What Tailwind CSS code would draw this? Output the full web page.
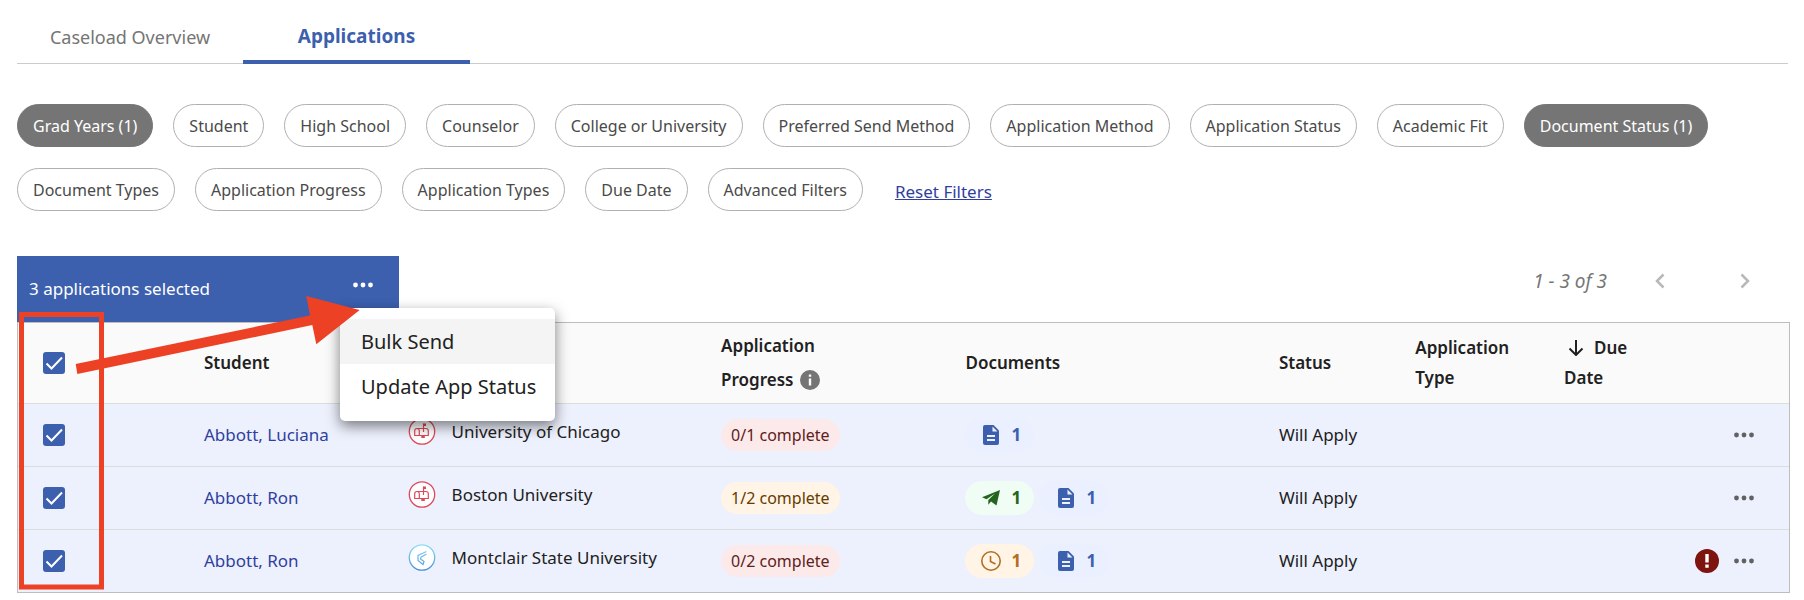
<!DOCTYPE html>
<html lang="en">
<head>
    <meta charset="UTF-8">
    <meta name="viewport" content="width=device-width, initial-scale=1.0">
    <title>Applications</title>
    <script src="https://cdn.jsdelivr.net/npm/@tailwindcss/browser@4"></script>
</head>
<body class="bg-white font-['Noto_Sans',sans-serif] text-[17px] text-[#212121]">
    <!-- Shared icons -->
    <svg class="hidden">
        <symbol id="dots" viewBox="0 0 20 6">
            <circle cx="2.500" cy="3" r="2.400" fill="currentColor"/>
            <circle cx="10" cy="3" r="2.400" fill="currentColor"/>
            <circle cx="17.500" cy="3" r="2.400" fill="currentColor"/>
        </symbol>
        <symbol id="tick" viewBox="0 0 22 22">
            <path d="M3.500 11.500 8.500 16.500 19 5.500" fill="none" stroke="#fff" stroke-width="2"/>
        </symbol>
        <symbol id="doc" viewBox="0 0 16 20">
            <path d="M2 0H10.500L16 5.500V18a2 2 0 0 1-2 2H2a2 2 0 0 1-2-2V2a2 2 0 0 1 2-2Z" fill="currentColor"/>
            <path d="M9.500 1.500V6.500H14.500ZM4 10H12V12H4ZM4 14H12V16H4Z" fill="#edf1fd"/>
        </symbol>
        <symbol id="mailbox" viewBox="0 0 28 27">
            <circle cx="14" cy="13.500" r="12.700" fill="#fff" stroke="#dc4a5c" stroke-width="1.300"/>
            <g fill="none" stroke="#dc4a5c" stroke-width="1.200">
                <path d="M9 10.500h9a2.300 2.300 0 0 1 2.300 2.300v4.700H6.700V12.800a2.300 2.300 0 0 1 4.600 0v4.700"/>
                <path d="M15.500 14V5.500"/>
            </g>
            <path d="M15.500 5.500h2.500v2.500h-2.500ZM13.300 17.500h3.500v2.500h-3.500Z" fill="#dc4a5c"/>
        </symbol>
    </svg>

    <main class="relative px-4">
        <!-- Tabs -->
        <nav class="ml-px flex h-16 border-b border-[#ccc]">
            <button class="h-16 w-[226px] pt-3 pb-0.5 text-lg text-[#757575]">Caseload Overview</button>
            <button class="h-16 w-[227px] border-b-4 border-[#3c5fae] pt-3 text-[19px] font-bold text-[#3c5fae]">Applications</button>
        </nav>

        <!-- Filters -->
        <div class="mt-10 ml-px flex flex-wrap gap-x-5 gap-y-[21px]">
            <button class="h-[43px] rounded-full border border-[#757575] bg-[#757575] px-[15px] text-base text-white">Grad Years (1)</button>
            <button class="h-[43px] rounded-full border border-[#b0b0b0] px-[15px] text-base text-[#4a4a4a]">Student</button>
            <button class="h-[43px] rounded-full border border-[#b0b0b0] px-[15px] text-base text-[#4a4a4a]">High School</button>
            <button class="h-[43px] rounded-full border border-[#b0b0b0] px-[15px] text-base text-[#4a4a4a]">Counselor</button>
            <button class="h-[43px] rounded-full border border-[#b0b0b0] px-[15px] text-base text-[#4a4a4a]">College or University</button>
            <button class="h-[43px] rounded-full border border-[#b0b0b0] px-[15px] text-base text-[#4a4a4a]">Preferred Send Method</button>
            <button class="h-[43px] rounded-full border border-[#b0b0b0] px-[15px] text-base text-[#4a4a4a]">Application Method</button>
            <button class="h-[43px] rounded-full border border-[#b0b0b0] px-[15px] text-base text-[#4a4a4a]">Application Status</button>
            <button class="h-[43px] rounded-full border border-[#b0b0b0] px-[15px] text-base text-[#4a4a4a]">Academic Fit</button>
            <button class="h-[43px] rounded-full border border-[#757575] bg-[#757575] px-[15px] text-base text-white">Document Status (1)</button>
            <button class="h-[43px] rounded-full border border-[#b0b0b0] px-[15px] text-base text-[#4a4a4a]">Document Types</button>
            <button class="h-[43px] rounded-full border border-[#b0b0b0] px-[15px] text-base text-[#4a4a4a]">Application Progress</button>
            <button class="h-[43px] rounded-full border border-[#b0b0b0] px-[15px] text-base text-[#4a4a4a]">Application Types</button>
            <button class="h-[43px] rounded-full border border-[#b0b0b0] px-[15px] text-base text-[#4a4a4a]">Due Date</button>
            <button class="h-[43px] rounded-full border border-[#b0b0b0] px-[15px] text-base text-[#4a4a4a]">Advanced Filters</button>
            <a href="#" class="ml-3 self-center pt-1 text-[17px] text-[#303f9f] underline">Reset Filters</a>
        </div>

        <!-- Bulk action bar and pagination -->
        <div class="mt-[45px] ml-px flex justify-between">
            <div class="relative flex h-[66px] w-[382px] items-center justify-between bg-[#3c5fae] pr-[26px] pl-3 text-white">
                <span>3 applications selected</span>
                <button aria-label="Bulk actions" class="pb-2"><svg class="h-[6px] w-5"><use href="#dots"/></svg></button>
                <div role="menu" class="absolute top-[52px] left-[323px] z-10 w-[215px] rounded-[5px] bg-white pt-[11px] pb-3 text-[#212121] shadow-[0_5px_14px_rgba(0,0,0,0.5)]">
                    <button role="menuitem" class="block h-[45px] w-full bg-[#f4f4f4] px-[21px] text-left text-xl whitespace-nowrap">Bulk Send</button>
                    <button role="menuitem" class="block h-[45px] w-full px-[21px] text-left text-xl whitespace-nowrap">Update App Status</button>
                </div>
            </div>
            <div class="mr-[38px] flex h-[50px] items-center text-[#757575]">
                <span class="text-[19px] italic">1 - 3 of 3</span>
                <button aria-label="Previous page" class="ml-12"><svg class="h-4 w-[10px]" viewBox="0 0 10 16" fill="none" stroke="#b8b8b8" stroke-width="2.500"><path d="M8.500 1.500 2 8l6.500 6.500"/></svg></button>
                <button aria-label="Next page" class="ml-[75px]"><svg class="h-4 w-[10px]" viewBox="0 0 10 16" fill="none" stroke="#b8b8b8" stroke-width="2.500"><path d="M1.500 1.500 8 8l-6.500 6.500"/></svg></button>
            </div>
        </div>

        <!-- Applications table -->
        <div class="-mr-[2px] ml-px border border-[#bdbdbd]">
            <table class="w-full table-fixed border-collapse text-left">
                <colgroup>
                    <col class="w-[10.5%]">
                    <col class="w-[11.5%]">
                    <col class="w-[17.7%]">
                    <col class="w-[13.8%]">
                    <col class="w-[17.7%]">
                    <col class="w-[7.7%]">
                    <col class="w-[8.4%]">
                    <col class="w-[6.7%]">
                    <col class="w-[6%]">
                </colgroup>
                <thead class="bg-[#fafafa]">
                    <tr class="h-20 border-b border-[#dcdcdc]">
                        <th class="pl-[25px]">
                            <label class="grid size-[22px]"><input type="checkbox" checked aria-label="Select all" class="col-start-1 row-start-1 size-[22px] appearance-none rounded-[3px] checked:bg-[#3c5fae]"><svg class="pointer-events-none col-start-1 row-start-1 size-[22px]"><use href="#tick"/></svg></label>
                        </th>
                        <th class="font-semibold">Student</th>
                        <th class="font-semibold">College</th>
                        <th class="leading-[34px] font-semibold">Application<br><span class="flex items-center gap-[7px]">Progress
                            <svg class="size-5" viewBox="0 0 20 20"><circle cx="10" cy="10" r="10" fill="#757575"/><path d="M8.800 4.500h2.400v2.300H8.800ZM8.800 8.500h2.400V15.500H8.800Z" fill="#fff"/></svg></span></th>
                        <th class="font-semibold">Documents</th>
                        <th class="font-semibold">Status</th>
                        <th class="leading-[30px] font-semibold">Application<br>Type</th>
                        <th class="leading-[30px] font-semibold"><span class="flex items-center gap-[10px] pl-1">
                            <svg class="h-4 w-4" viewBox="0 0 16 16" fill="none" stroke="#212121" stroke-width="2"><path d="M8 0V15M1.500 8.500 8 15l6.500-6.500"/></svg>Due</span>Date</th>
                        <th></th>
                    </tr>
                </thead>
                <tbody class="bg-[#edf1fd]">
                    <tr class="h-[63px] border-b border-[#dcdcdc]">
                        <td class="pl-[25px]">
                            <label class="grid size-[22px]"><input type="checkbox" checked aria-label="Select Abbott, Luciana" class="col-start-1 row-start-1 size-[22px] appearance-none rounded-[3px] checked:bg-[#3c5fae]"><svg class="pointer-events-none col-start-1 row-start-1 size-[22px]"><use href="#tick"/></svg></label>
                        </td>
                        <td><a href="#" class="text-[#303f9f]">Abbott, Luciana</a></td>
                        <td><span class="flex items-center gap-4 pb-[6px]"><svg class="h-[27px] w-7"><use href="#mailbox"/></svg>University of Chicago</span></td>
                        <td><span class="inline-flex h-8 items-center rounded-full bg-[#fceaea] px-[10px] text-base text-[#5f2120]">0/1 complete</span></td>
                        <td>
                            <span class="flex gap-[6px]">
                                <span class="flex h-[34px] w-[69px] items-center gap-3 rounded-full bg-[#eaf0ff] pl-[18px] font-bold text-[#3c5fae]"><svg class="h-5 w-4"><use href="#doc"/></svg>1</span>
                            </span>
                        </td>
                        <td>Will Apply</td>
                        <td></td>
                        <td></td>
                        <td><span class="flex items-center justify-end gap-[15px] pr-[35px] text-[#616161]"><button aria-label="Actions"><svg class="h-[6px] w-5"><use href="#dots"/></svg></button></span></td>
                    </tr>
                    <tr class="h-[63px] border-b border-[#dcdcdc]">
                        <td class="pl-[25px]">
                            <label class="grid size-[22px]"><input type="checkbox" checked aria-label="Select Abbott, Ron, Boston University" class="col-start-1 row-start-1 size-[22px] appearance-none rounded-[3px] checked:bg-[#3c5fae]"><svg class="pointer-events-none col-start-1 row-start-1 size-[22px]"><use href="#tick"/></svg></label>
                        </td>
                        <td><a href="#" class="text-[#303f9f]">Abbott, Ron</a></td>
                        <td><span class="flex items-center gap-4 pb-[6px]"><svg class="h-[27px] w-7"><use href="#mailbox"/></svg>Boston University</span></td>
                        <td><span class="inline-flex h-8 items-center rounded-full bg-[#fff4e5] px-[10px] text-base text-[#663c00]">1/2 complete</span></td>
                        <td>
                            <span class="flex gap-[6px]">
                                <span class="flex h-[34px] w-[69px] items-center gap-[11px] rounded-full bg-[#effdf5] pl-[17px] font-bold text-[#24651d]"><svg class="h-4 w-[18px]" viewBox="0 0 18 16"><path d="M18 0 0 7.200 4.500 9.200 13 3.500 6.300 10V14.800L9 11.500 14.500 15.500Z" fill="currentColor"/></svg>1</span>
                                <span class="flex h-[34px] w-[69px] items-center gap-3 rounded-full bg-[#eaf0ff] pl-[18px] font-bold text-[#3c5fae]"><svg class="h-5 w-4"><use href="#doc"/></svg>1</span>
                            </span>
                        </td>
                        <td>Will Apply</td>
                        <td></td>
                        <td></td>
                        <td><span class="flex items-center justify-end gap-[15px] pr-[35px] text-[#616161]"><button aria-label="Actions"><svg class="h-[6px] w-5"><use href="#dots"/></svg></button></span></td>
                    </tr>
                    <tr class="h-[63px]">
                        <td class="pl-[25px]">
                            <label class="grid size-[22px]"><input type="checkbox" checked aria-label="Select Abbott, Ron, Montclair State University" class="col-start-1 row-start-1 size-[22px] appearance-none rounded-[3px] checked:bg-[#3c5fae]"><svg class="pointer-events-none col-start-1 row-start-1 size-[22px]"><use href="#tick"/></svg></label>
                        </td>
                        <td><a href="#" class="text-[#303f9f]">Abbott, Ron</a></td>
                        <td><span class="flex items-center gap-4 pb-[6px]">
                            <svg class="h-[27px] w-7" viewBox="0 0 28 27">
                                <defs><linearGradient id="sky" gradientUnits="userSpaceOnUse" x1="14" y1="0" x2="14" y2="27"><stop offset="0" stop-color="#8fe0f7"/><stop offset="1" stop-color="#4a8fd8"/></linearGradient></defs>
                                <circle cx="14" cy="13.500" r="12.700" fill="#fff" stroke="url(#sky)" stroke-width="1.300"/>
                                <path d="M18.500 7.500 10 11.500V16.500L15 20.500 16 17.500 12.500 15 13 13.200 18.500 10" fill="none" stroke="url(#sky)" stroke-width="1.200"/>
                            </svg>Montclair State University</span></td>
                        <td><span class="inline-flex h-8 items-center rounded-full bg-[#fceaea] px-[10px] text-base text-[#5f2120]">0/2 complete</span></td>
                        <td>
                            <span class="flex gap-[6px]">
                                <span class="flex h-[34px] w-[69px] items-center gap-[10px] rounded-full bg-[#fff4e5] pl-4 font-bold text-[#b06f21]"><svg class="size-5" viewBox="0 0 20 20" fill="none" stroke="currentColor" stroke-width="1.600"><circle cx="10" cy="10" r="9.200"/><path d="M9.500 5V10.500L14.500 13"/></svg>1</span>
                                <span class="flex h-[34px] w-[69px] items-center gap-3 rounded-full bg-[#eaf0ff] pl-[18px] font-bold text-[#3c5fae]"><svg class="h-5 w-4"><use href="#doc"/></svg>1</span>
                            </span>
                        </td>
                        <td>Will Apply</td>
                        <td></td>
                        <td></td>
                        <td><span class="flex items-center justify-end gap-[15px] pr-[35px] text-[#616161]"><svg class="size-6" viewBox="0 0 24 24"><circle cx="12" cy="12" r="12" fill="#7d140e"/><path d="M10.300 5h3.400v8.500h-3.400ZM10.300 15.500h3.400v3.300h-3.400Z" fill="#fff"/></svg><button aria-label="Actions"><svg class="h-[6px] w-5"><use href="#dots"/></svg></button></span></td>
                    </tr>
                </tbody>
            </table>
        </div>

        <!-- Callout: selected rows to the bulk menu -->
        <svg class="pointer-events-none absolute top-0 left-0 z-20 h-[600px] w-[400px]" viewBox="0 0 400 600">
            <rect x="21.500" y="314.500" width="80" height="272.500" fill="none" stroke="#ec4125" stroke-width="5"/>
            <path d="M75.700 364 310 315.500 306.300 296 359.700 310 316.300 344.300 312.300 325 77.300 374Z" fill="#ec4125"/>
        </svg>
    </main>
</body>
</html>
